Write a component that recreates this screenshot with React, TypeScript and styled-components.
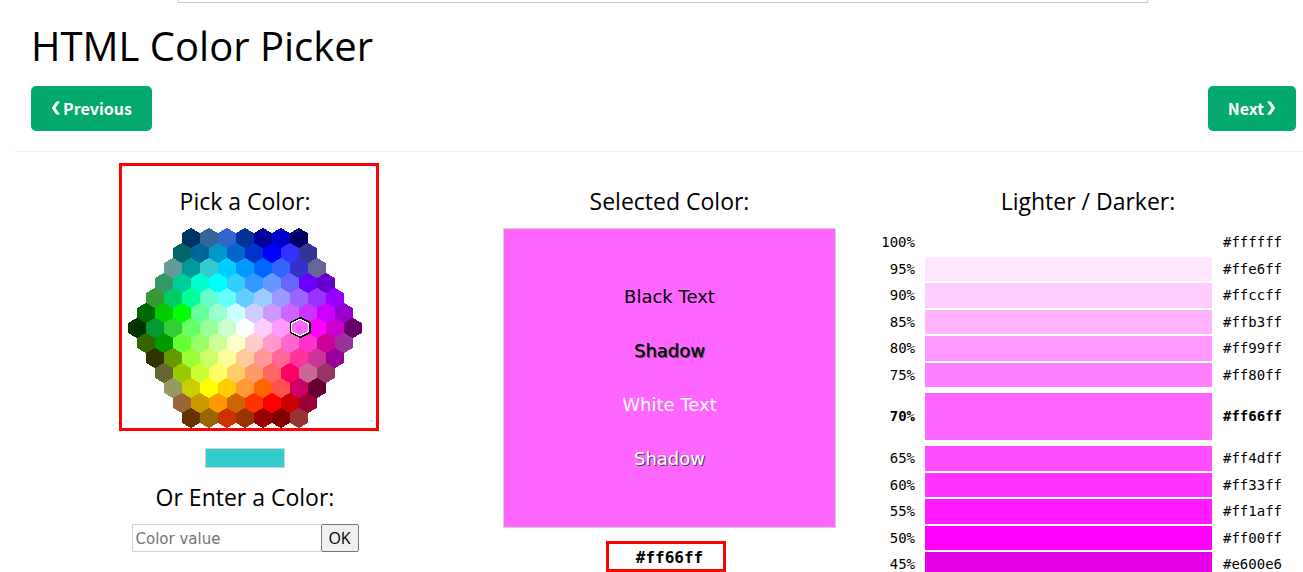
import React, { useState } from 'react';
import styled, { createGlobalStyle } from 'styled-components';

const GlobalStyle = createGlobalStyle`
  * { box-sizing: border-box; }
  html, body { height: 100%; }
  body {
    margin: 0;
    overflow: hidden;
    background: #fff;
    color: #000;
    font-family: 'DejaVu Sans', Verdana, sans-serif;
    font-size: 15px;
    line-height: 22px;
  }
`;

const headingFont = `'Open Sans', 'Segoe UI', sans-serif`;
const monoFont = `'DejaVu Sans Mono', Consolas, monospace`;

const AdFrame = styled.div`
  height: 3px;
  margin: 0 155px 0 178px;
  border: 1px solid #ccc;
  border-top: 0;
`;

const Header = styled.header`
  margin-left: 15px;
  padding: 11px 7px 20px 16px;
  border-bottom: 1px solid #eee;
`;

const Title = styled.h1`
  margin: 0 0 8px;
  font-family: ${headingFont};
  font-size: 40px;
  font-weight: 400;
  line-height: 64px;
`;

const Nav = styled.nav`
  display: flex;
  justify-content: space-between;
`;

const NavLink = styled.a`
  display: flex;
  align-items: center;
  gap: 3px;
  height: 45px;
  padding: 0 20px 2px;
  border-radius: 5px;
  background: #04aa6d;
  color: #fff;
  font-family: 'Noto Sans CJK SC', 'Source Sans Pro', sans-serif;
  font-size: 16px;
  font-weight: 700;
  text-decoration: none;
`;

const Columns = styled.main`
  display: grid;
  grid-template-columns: 428fr 333fr 416fr;
  gap: 44px;
  padding: 33px 7px 0 31px;
`;

const Column = styled.section`
  display: flex;
  flex-direction: column;
  align-items: center;
  min-width: 0;
`;

const Heading = styled.h3`
  margin: 0 0 11px;
  font-family: ${headingFont};
  font-size: 23px;
  font-weight: 400;
  line-height: 32px;
  white-space: nowrap;
`;

const PickArea = styled.div`
  position: relative;
  display: flex;
  flex-direction: column;
  align-items: center;
`;

const PickHighlight = styled.div`
  position: absolute;
  top: -22px;
  left: -9px;
  right: -17px;
  bottom: -3px;
  border: 3px solid #f00;
  pointer-events: none;
`;

const HexMap = styled.svg`
  display: block;
  overflow: visible;
`;

const Preview = styled.div`
  width: 80px;
  height: 20px;
  margin: 20px 0 13px;
  border: 1px solid #d3d3d3;
  background: #33cccc;
`;

const EntryForm = styled.form`
  display: flex;
`;

const EntryInput = styled.input`
  width: 189px;
  height: 28px;
  padding: 2px 3px 0;
  border: 1px solid #d3d3d3;
  border-right: 0;
  font: inherit;
  &::placeholder { color: #757575; }
`;

const OkButton = styled.button`
  width: 38px;
  height: 28px;
  padding: 0;
  border: 1px solid #767676;
  border-radius: 2px;
  background: #efefef;
  color: #000;
  font-family: ${headingFont};
  font-size: 16px;
`;

const Selected = styled.div`
  display: flex;
  flex-direction: column;
  align-items: center;
  justify-content: center;
  gap: 32px;
  width: 100%;
  height: 300px;
  border: 1px solid #d3d3d3;
  background: #ff66ff;
`;

const Sample = styled.span<{ $color: string; $shadow?: string }>`
  color: ${(p) => p.$color};
  font-size: 18px;
  text-shadow: ${(p) => (p.$shadow ? `1px 1px 0 ${p.$shadow}` : 'none')};
`;

const SelectedCode = styled.div`
  width: 120px;
  height: 31px;
  margin: 13px 8px 0 0;
  padding-left: 8px;
  border: 3px solid #f00;
  font-family: ${monoFont};
  font-size: 16px;
  font-weight: 700;
  line-height: 28px;
  text-align: center;
`;

const Shades = styled.table`
  width: 100%;
  margin-top: 2px;
  border-collapse: collapse;
  font-family: ${monoFont};
  font-size: 14px;
  line-height: 20px;
`;

const ShadeRow = styled.tr<{ $active: boolean }>`
  font-weight: ${(p) => (p.$active ? 700 : 400)};
  td { padding-top: ${(p) => (p.$active ? 4 : 0)}px; padding-bottom: ${(p) => (p.$active ? 6 : 2)}px; }
  td:not(:nth-child(2)) { padding-bottom: ${(p) => (p.$active ? 7 : 3)}px; }
`;

const Percent = styled.td`
  width: 45px;
  padding: 0 10px 0 0;
  text-align: right;
`;

const BarCell = styled.td`
  padding: 0;
`;

const Bar = styled.div<{ $color: string; $height: number }>`
  height: ${(p) => p.$height}px;
  background: ${(p) => p.$color};
`;

const Code = styled.td`
  width: 84px;
  padding: 0 0 0 11px;
`;

const hexRows = [
  '003366 336699 3366cc 003399 000099 0000cc 000066',
  '006666 006699 0099cc 0066cc 0033cc 0000ff 3333ff 333399',
  '669999 009999 33cccc 00ccff 0099ff 0066ff 3366ff 3333cc 666699',
  '339966 00cc99 00ffcc 00ffff 33ccff 3399ff 6699ff 6666ff 6600ff 6600cc',
  '339933 00cc66 00ff99 66ffcc 66ffff 66ccff 99ccff 9999ff 9966ff 9933ff 9900ff',
  '006600 00cc00 00ff00 66ff99 99ffcc ccffff ccccff cc99ff cc66ff cc33ff cc00ff 9900cc',
  '003300 009933 33cc33 66ff66 99ff99 ccffcc ffffff ffccff ff99ff ff66ff ff00ff cc00cc 660066',
  '336600 009900 66ff33 99ff66 ccff99 ffffcc ffcccc ff99cc ff66cc ff33cc cc0099 993399',
  '333300 669900 99ff33 ccff66 ffff99 ffcc99 ff9999 ff6699 ff3399 cc3399 990099',
  '666633 99cc00 ccff33 ffff66 ffcc66 ff9966 ff6666 ff0066 cc6699 993366',
  '999966 cccc00 ffff00 ffcc00 ff9933 ff6600 ff5050 cc0066 660033',
  '996633 cc9900 ff9900 cc6600 ff3300 ff0000 cc0000 990033',
  '663300 996600 cc3300 993300 990000 800000 993333',
].map((row) => row.split(' '));

const shades = [
  { percent: 100, color: '#ffffff', height: 25 },
  { percent: 95, color: '#ffe6ff', height: 24 },
  { percent: 90, color: '#ffccff', height: 25 },
  { percent: 85, color: '#ffb3ff', height: 24 },
  { percent: 80, color: '#ff99ff', height: 25 },
  { percent: 75, color: '#ff80ff', height: 24 },
  { percent: 70, color: '#ff66ff', height: 47 },
  { percent: 65, color: '#ff4dff', height: 25 },
  { percent: 60, color: '#ff33ff', height: 24 },
  { percent: 55, color: '#ff1aff', height: 25 },
  { percent: 50, color: '#ff00ff', height: 24 },
  { percent: 45, color: '#e600e6', height: 25 },
];

const hexagon = (x: number, y: number) =>
  `${x + 9},${y} ${x + 18},${y + 5} ${x + 18},${y + 15} ${x + 9},${y + 20} ${x},${y + 15} ${x},${y + 5}`;

function ColorMap() {
  return (
    <HexMap width="234" height="200" viewBox="0 0 234 200" role="img" aria-label="Color map">
      <g shapeRendering="crispEdges">
        {hexRows.map((row, r) =>
          row.map((color, c) => (
            <polygon key={`${r}-${c}`} points={hexagon((13 - row.length) * 9 + c * 18, r * 15)} fill={`#${color}`} />
          )),
        )}
      </g>
      <g shapeRendering="crispEdges">
        <polygon points="172.5,88.5 183,94 183,105 172.5,110.5 162,105 162,94" fill="#000" />
        <polygon points="172.5,90.5 181,95 181,104 172.5,108.5 163,104 163,95" fill="#fff" />
        <polygon points="172.5,92 180,96 180,103 172.5,107 164,103 164,96" fill="#ff66ff" />
      </g>
    </HexMap>
  );
}

function Chevron({ direction }: { direction: 'left' | 'right' }) {
  return (
    <svg width="9" height="14" viewBox="0 0 9 14" fill="#fff" aria-hidden="true">
      {direction === 'left' ? (
        <path d="M5.2 0.5H9L4.4 7L9 13.5H5.2L0.8 7Z" />
      ) : (
        <path d="M3.8 0.5H0L4.6 7L0 13.5H3.8L8.2 7Z" />
      )}
    </svg>
  );
}

export default function App() {
  const [value, setValue] = useState('');
  return (
    <>
      <GlobalStyle />
      <AdFrame />
      <Header>
        <Title>HTML Color Picker</Title>
        <Nav>
          <NavLink href="#previous"><Chevron direction="left" />Previous</NavLink>
          <NavLink href="#next">Next<Chevron direction="right" /></NavLink>
        </Nav>
      </Header>
      <Columns>
        <Column>
          <PickArea>
            <Heading>Pick a Color:</Heading>
            <ColorMap />
            <PickHighlight />
          </PickArea>
          <Preview />
          <Heading as="label" htmlFor="color-value">Or Enter a Color:</Heading>
          <EntryForm onSubmit={(e) => e.preventDefault()}>
            <EntryInput
              id="color-value"
              type="text"
              placeholder="Color value"
              value={value}
              onChange={(e) => setValue(e.target.value)}
            />
            <OkButton type="submit">OK</OkButton>
          </EntryForm>
        </Column>
        <Column>
          <Heading>Selected Color:</Heading>
          <Selected>
            <Sample $color="#000">Black Text</Sample>
            <Sample $color="#000" $shadow="#444">Shadow</Sample>
            <Sample $color="#fff">White Text</Sample>
            <Sample $color="#fff" $shadow="#444">Shadow</Sample>
          </Selected>
          <SelectedCode>#ff66ff</SelectedCode>
        </Column>
        <Column>
          <Heading>Lighter / Darker:</Heading>
          <Shades>
            <tbody>
              {shades.map((s) => (
                <ShadeRow key={s.percent} $active={s.percent === 70}>
                  <Percent>{s.percent}%</Percent>
                  <BarCell><Bar $color={s.color} $height={s.height} /></BarCell>
                  <Code>{s.color}</Code>
                </ShadeRow>
              ))}
            </tbody>
          </Shades>
        </Column>
      </Columns>
    </>
  );
}
